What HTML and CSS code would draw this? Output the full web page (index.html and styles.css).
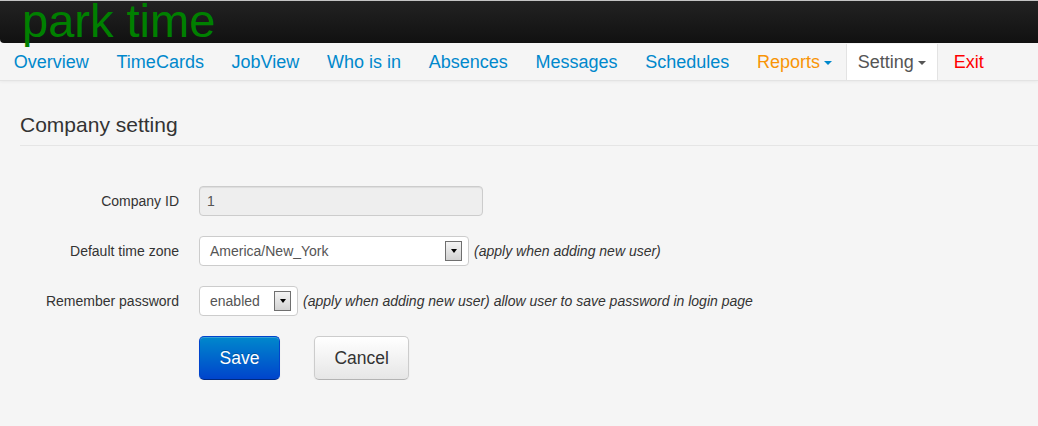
FILE: index.html
```html
<!DOCTYPE html>
<html>
<head>
<meta charset="utf-8">
<title>park time - Company setting</title>
<link rel="stylesheet" href="styles.css">
</head>
<body>
<header class="topbar"><span class="brand">park time</span></header>
<nav class="navbar">
  <ul class="nav">
    <li><a class="nav-link">Overview</a></li>
    <li><a class="nav-link">TimeCards</a></li>
    <li><a class="nav-link">JobView</a></li>
    <li><a class="nav-link">Who is in</a></li>
    <li><a class="nav-link">Absences</a></li>
    <li><a class="nav-link">Messages</a></li>
    <li><a class="nav-link">Schedules</a></li>
    <li class="reports"><a class="nav-link">Reports<b class="caret"></b></a></li>
    <li class="active"><a class="nav-link">Setting<b class="caret"></b></a></li>
    <li class="exit"><a class="nav-link">Exit</a></li>
  </ul>
</nav>
<main class="content">
  <h2 class="page-title">Company setting</h2>
  <form class="form">
    <div class="row">
      <label class="label">Company ID</label>
      <div class="input disabled">1</div>
    </div>
    <div class="row">
      <label class="label">Default time zone</label>
      <div class="select select-wide"><span class="select-text">America/New_York</span><span class="arrow"><i class="tri"></i></span></div>
      <span class="note">(apply when adding new user)</span>
    </div>
    <div class="row">
      <label class="label">Remember password</label>
      <div class="select select-small"><span class="select-text">enabled</span><span class="arrow"><i class="tri"></i></span></div>
      <span class="note">(apply when adding new user) allow user to save password in login page</span>
    </div>
    <div class="actions">
      <button type="button" class="btn btn-primary">Save</button>
      <button type="button" class="btn">Cancel</button>
    </div>
  </form>
</main>
</body>
</html>
```
FILE: styles.css
```css
html, body {
  margin: 0;
  padding: 0;
}
body {
  background: #f5f5f5;
  font-family: "Liberation Sans", Arial, sans-serif;
  color: #333;
}
.topbar {
  height: 42px;
  border-top: 1px solid #c4c4c4;
  background: linear-gradient(#222222, #111111);
  border-radius: 0 0 0 4px;
}
.brand {
  display: block;
  padding-left: 22px;
  font-size: 47px;
  line-height: 40px;
  color: #008000;
  white-space: nowrap;
}
.navbar {
  height: 37px;
  background: #f5f5f5;
  border-bottom: 1px solid #e3e3e3;
  box-shadow: 0 1px 3px rgba(0, 0, 0, 0.05);
}
.nav {
  display: flex;
  margin: 0;
  padding: 0;
  list-style: none;
  height: 37px;
}
.nav-link {
  display: block;
  padding: 1px 13.85px 0;
  font-size: 18px;
  line-height: 36px;
  color: #0088cc;
  white-space: nowrap;
  cursor: pointer;
}
.caret {
  display: inline-block;
  width: 0;
  height: 0;
  margin-left: 4px;
  vertical-align: 3px;
  border-top: 4px solid currentColor;
  border-left: 4px solid transparent;
  border-right: 4px solid transparent;
}
.reports .nav-link {
  color: #f89406;
}
.reports .caret {
  border-top-color: #0088cc;
}
.active {
  margin-left: 0;
  margin-right: 2px;
}
.active .nav-link {
  margin-top: 1px;
  line-height: 36px;
  padding: 0 11px;
  background: #ffffff;
  border-left: 1px solid #e3e3e3;
  border-right: 1px solid #e3e3e3;
  color: #555555;
}
.exit .nav-link {
  color: #ff0000;
}
.content {
  padding: 29px 0 0 20px;
}
.page-title {
  margin: 0;
  padding-bottom: 5px;
  font-size: 21px;
  line-height: 30px;
  font-weight: normal;
  color: #333;
  border-bottom: 1px solid #e5e5e5;
}
.form {
  margin: 40px 0 0;
}
.row {
  display: flex;
  align-items: center;
  height: 30px;
  margin-bottom: 20px;
}
.label {
  width: 159px;
  margin-right: 20px;
  text-align: right;
  font-size: 14px;
  color: #333;
}
.input {
  box-sizing: border-box;
  width: 284px;
  height: 30px;
  padding: 0 7px;
  line-height: 28px;
  font-size: 14px;
  color: #555;
  background: #eeeeee;
  border: 1px solid #cccccc;
  border-radius: 4px;
  box-shadow: inset 0 1px 1px rgba(0, 0, 0, 0.075);
}
.select {
  box-sizing: border-box;
  display: flex;
  align-items: center;
  height: 30px;
  padding-left: 10px;
  background: #ffffff;
  border: 1px solid #cccccc;
  border-radius: 4px;
  font-size: 14px;
  color: #555;
}
.select-wide {
  width: 270px;
}
.select-small {
  width: 99px;
}
.arrow {
  box-sizing: border-box;
  display: flex;
  align-items: center;
  justify-content: center;
  width: 17px;
  height: 20px;
  margin-left: auto;
  margin-right: 6px;
  border: 1px solid #6f6f6f;
  background: linear-gradient(#f4f4f4, #d2d2d2);
}
.tri {
  display: block;
  width: 0;
  height: 0;
  border-top: 4px solid #000;
  border-left: 3.5px solid transparent;
  border-right: 3.5px solid transparent;
}
.note {
  margin-left: 5px;
  font-size: 14px;
  font-style: italic;
  color: #333;
  white-space: nowrap;
}
.actions {
  display: flex;
  gap: 34px;
  margin-left: 179px;
}
.btn {
  padding: 11px 19.5px;
  font-family: "Liberation Sans", Arial, sans-serif;
  font-size: 17.5px;
  line-height: 20px;
  color: #333;
  background: linear-gradient(#ffffff, #e6e6e6);
  border: 1px solid #cccccc;
  border-bottom-color: #b3b3b3;
  border-radius: 5px;
  box-shadow: inset 0 1px 0 rgba(255, 255, 255, 0.2), 0 1px 2px rgba(0, 0, 0, 0.05);
  cursor: pointer;
}
.btn-primary {
  color: #ffffff;
  background: linear-gradient(#0088cc, #0044cc);
  border-color: #0044cc #0044cc #002a80;
  text-shadow: 0 -1px 0 rgba(0, 0, 0, 0.25);
}
```
